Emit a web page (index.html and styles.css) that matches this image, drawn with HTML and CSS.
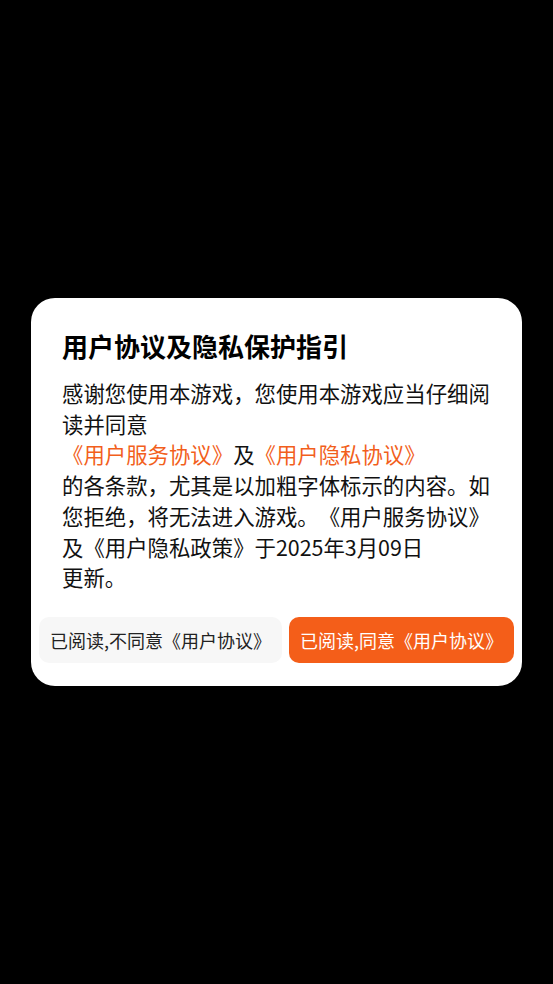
FILE: index.html
```html
<!DOCTYPE html>
<html lang="zh-CN">
<head>
  <meta charset="UTF-8" />
  <title>用户协议及隐私保护指引</title>
  <link rel="stylesheet" href="styles.css">
</head>
<body>
  <div class="mask">
    <div class="dialog">
      <div class="content">
        <h1 class="title">用户协议及隐私保护指引</h1>
        <p class="text">
          感谢您使用本游戏，您使用本游戏应当仔细阅读并同意<br>
          <span class="link">《用户服务协议》</span>及<span class="link">《用户隐私协议》</span><br>
          的各条款，尤其是以加粗字体标示的内容。如您拒绝，将无法进入游戏。《用户服务协议》及《用户隐私政策》于2025年3月09日<br>
          更新。
        </p>
      </div>
      <div class="actions">
        <button type="button" class="btn btn-refuse">已阅读,不同意《用户协议》</button>
        <button type="button" class="btn btn-agree">已阅读,同意《用户协议》</button>
      </div>
    </div>
  </div>
</body>
</html>
```
FILE: styles.css
```css
html, body {
  margin: 0;
  height: 100%;
  background: #000;
  font-family: "Noto Sans CJK SC", "Noto Sans", sans-serif;
  text-spacing-trim: space-all;
}
.mask {
  height: 100%;
  display: flex;
  align-items: center;
  justify-content: center;
}
.dialog {
  width: 491px;
  box-sizing: border-box;
  background: #fff;
  border-radius: 24px;
  padding: 30px 8px 23px;
}
.content {
  padding: 0 23px;
}
.title {
  margin: 0;
  font-size: 26px;
  line-height: 36px;
  font-weight: bold;
  color: #000;
}
.text {
  margin: 14px 0 0;
  font-size: 21.4px;
  line-height: 30.7px;
  color: #111;
}
.link {
  color: #f25f1c;
}
.actions {
  margin-top: 24px;
  display: flex;
  justify-content: space-between;
}
.btn {
  height: 46px;
  padding: 0 11px;
  border: none;
  border-radius: 10px;
  font-family: inherit;
  font-size: 18px;
  white-space: nowrap;
  text-spacing-trim: space-all;
}
.btn-refuse {
  background: #f7f7f7;
  color: #222;
}
.btn-agree {
  background: #f45e19;
  color: #fff;
}
```
